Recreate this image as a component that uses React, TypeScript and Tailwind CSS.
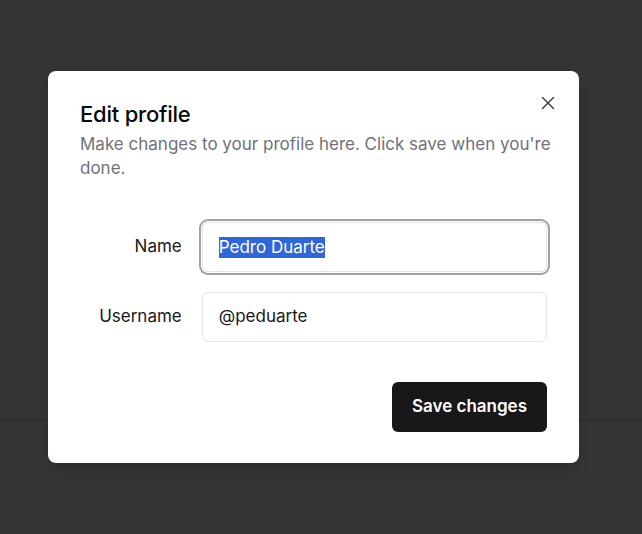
import { X } from "lucide-react";

const App = () => {
  return (
    <div
      className="relative w-[642px] h-[534px] bg-[#343434] overflow-hidden"
      style={{ fontFamily: "Inter, 'Noto Sans', sans-serif" }}
    >
      <div className="h-[421px] bg-[#333333] border-b border-[#2b2b2b]" />

      <div className="absolute left-[48px] top-[71px] w-[531px] h-[392px] bg-white rounded-lg shadow-lg px-8 pt-[29px] pb-8 flex flex-col">
        <button className="absolute right-[20px] top-[21px] text-zinc-700">
          <X size={22} strokeWidth={1.5} />
        </button>

        <h2 className="text-[22px] leading-7 font-medium text-[#09090b] tracking-[-0.01em]">
          Edit profile
        </h2>
        <p className="mt-1 -mr-3 text-[17px] leading-6 text-[#71717a]">
          Make changes to your profile here. Click save when you're done.
        </p>

        <div className="mt-[42px] grid grid-cols-4 gap-x-5 gap-y-5 items-center">
          <label className="text-right text-[17px] text-[#18181b]">Name</label>
          <div className="col-span-3 h-[50px] rounded-md border border-zinc-200 ring-2 ring-[#a1a1aa] ring-offset-1 flex items-center px-4 text-[17px] text-[#18181b]">
            <span className="bg-[#3066d5] text-white leading-[21px]">Pedro Duarte</span>
          </div>

          <label className="text-right text-[17px] text-[#18181b]">Username</label>
          <div className="col-span-3 h-[50px] rounded-md border border-zinc-200 flex items-center px-4 text-[17px] text-[#18181b]">
            @peduarte
          </div>
        </div>

        <div className="mt-[40px] flex justify-end">
          <button className="w-[155px] h-[50px] rounded-md bg-[#18181b] text-white text-[17px] font-semibold">
            Save changes
          </button>
        </div>
      </div>
    </div>
  );
};

export default App;
